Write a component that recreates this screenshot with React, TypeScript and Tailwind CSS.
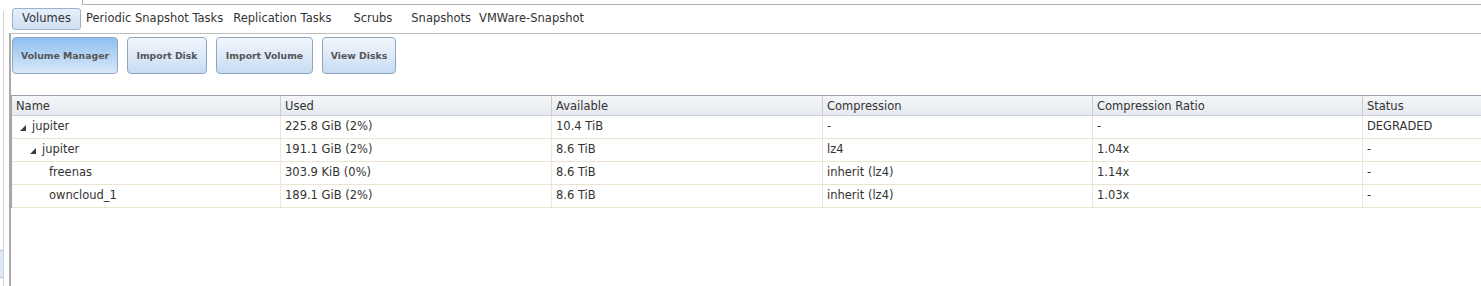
import React from 'react';

const tabs = ['Volumes', 'Periodic Snapshot Tasks', 'Replication Tasks', 'Scrubs', 'Snapshots', 'VMWare-Snapshot'];
const tabGaps = ['', 'ml-[5px]', 'ml-[10px]', 'ml-[22px]', 'ml-[19px]', 'ml-[8px]'];

const actions = [
  { label: 'Volume Manager', w: 'w-[106px]', active: true },
  { label: 'Import Disk', w: 'w-[80px]', active: false },
  { label: 'Import Volume', w: 'w-[97px]', active: false },
  { label: 'View Disks', w: 'w-[74px]', active: false },
];

const columns = ['Name', 'Used', 'Available', 'Compression', 'Compression Ratio', 'Status'];

const rows = [
  { name: 'jupiter', depth: 0, toggle: true, used: '225.8 GiB (2%)', avail: '10.4 TiB', comp: '-', ratio: '-', status: 'DEGRADED' },
  { name: 'jupiter', depth: 1, toggle: true, used: '191.1 GiB (2%)', avail: '8.6 TiB', comp: 'lz4', ratio: '1.04x', status: '-' },
  { name: 'freenas', depth: 2, toggle: false, used: '303.9 KiB (0%)', avail: '8.6 TiB', comp: 'inherit (lz4)', ratio: '1.14x', status: '-' },
  { name: 'owncloud_1', depth: 2, toggle: false, used: '189.1 GiB (2%)', avail: '8.6 TiB', comp: 'inherit (lz4)', ratio: '1.03x', status: '-' },
];

const grid = 'grid grid-cols-[268px_271px_271px_270px_270px_1fr]';
const indent = ['pl-[8px]', 'pl-[18px]', 'pl-[34px]'];

const Expander = () => (
  <svg width="6" height="6" viewBox="0 0 6 6" className="mr-[6px] mt-[2px] shrink-0">
    <polygon points="6,0 6,6 0,6" fill="#3c3c3c" />
  </svg>
);

export default function App() {
  return (
    <div className="flex h-[286px] w-full overflow-hidden bg-white text-[#333] font-['DejaVu_Sans',sans-serif]">
      {/* left edge of the sidebar that is cut off */}
      <div className="mt-[11px] flex w-[4px] shrink-0 flex-col border-r border-[#d4d4d4]">
        <div className="flex-1" />
        <div className="mb-[8px] h-[28px] border-y border-[#b9c9dc] bg-[#dde8f4]" />
      </div>
      <div className="w-[5px] shrink-0" />

      <div className="flex min-w-0 flex-1 flex-col">
        <div className="flex h-[5px]">
          <div className="w-[73px] shrink-0" />
          <div className="flex-1 border-b border-l border-[#b4b4b4]" />
        </div>

        {/* tab strip */}
        <div className="flex h-[29px] items-start border-b border-[#bdbdbd] pl-[3px] pt-[3px]">
          {tabs.map((t, i) =>
            i === 0 ? (
              <div
                key={t}
                className="flex h-[22px] w-[69px] items-center justify-center rounded-[3px] border border-[#9db2cc] bg-gradient-to-b from-[#e6effa] to-[#cfdff2] text-[11.5px]"
              >
                {t}
              </div>
            ) : (
              <div key={t} className={`flex h-[22px] items-center text-[11.5px] ${tabGaps[i]}`}>
                {t}
              </div>
            )
          )}
        </div>

        <div className="flex flex-1 flex-col border-l-2 border-[#a9a9a9]">
          {/* action buttons */}
          <div className="flex gap-[9px] pl-[1px] pt-[3px]">
            {actions.map((a) => (
              <div
                key={a.label}
                className={`flex h-[37px] ${a.w} items-center justify-center rounded-[4px] border border-[#8ea6c2] text-[9.3px] font-bold text-[#555] ${
                  a.active
                    ? 'bg-gradient-to-b from-[#8fc0ef] to-[#d9e8f8]'
                    : 'bg-gradient-to-b from-[#f3f7fc] to-[#c7dcf3]'
                }`}
              >
                {a.label}
              </div>
            ))}
          </div>

          {/* volumes grid */}
          <div className="mt-[21px] border-l border-[#a3a3a3] text-[11.5px]">
            <div className={`${grid} h-[21px] border-y border-t-[#9aa3ae] border-b-[#c9cfd6] bg-gradient-to-b from-[#f4f6f8] to-[#e6eaef]`}>
              {columns.map((c, i) => (
                <div key={c} className={`flex items-center pl-[4px] pt-[2px] ${i > 0 ? 'border-l border-[#c9ced5]' : ''}`}>
                  {c}
                </div>
              ))}
            </div>
            {rows.map((r, idx) => (
              <div key={idx} className={`${grid} h-[23px] border-b border-[#ece3d3]`}>
                <div className={`flex items-center ${indent[r.depth]}`}>
                  {r.toggle && <Expander />}
                  <span className={r.toggle ? '' : 'pl-[3px]'}>{r.name}</span>
                </div>
                {[r.used, r.avail, r.comp, r.ratio, r.status].map((v, i) => (
                  <div key={i} className="flex items-center border-l border-[#efe6d7] pl-[4px]">
                    {v}
                  </div>
                ))}
              </div>
            ))}
          </div>
        </div>
      </div>
    </div>
  );
}
